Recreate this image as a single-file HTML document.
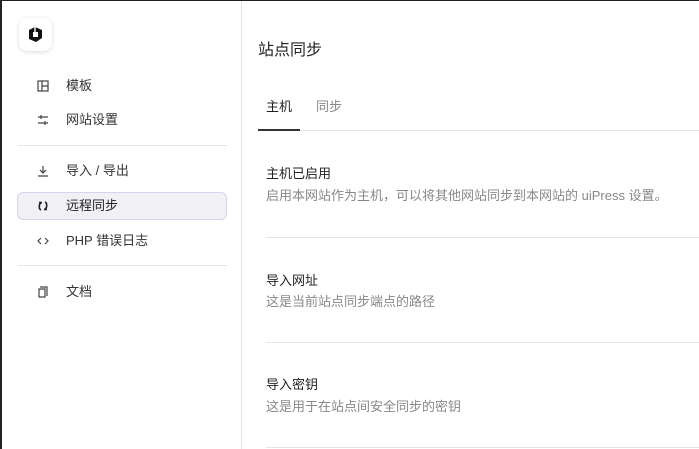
<!DOCTYPE html>
<html><head><meta charset="utf-8"><style>
*{margin:0;padding:0;box-sizing:border-box}
body{width:699px;height:449px;overflow:hidden;background:#fff;font-family:"Liberation Sans","Noto Sans CJK SC",sans-serif;position:relative;color:#222}
.frame{position:absolute;left:0;top:0;width:699px;height:449px;border-left:2px solid #222;border-top:1px solid #222}
.side{position:absolute;left:2px;top:1px;width:240px;height:448px;border-right:1px solid #e4e4e4}
.logo{position:absolute;left:17px;top:17px;width:33px;height:33px;border-radius:8px;background:#fff;box-shadow:0 1px 4px rgba(0,0,0,.15)}
.item{position:absolute;left:15px;width:210px;height:28px;font-size:13px;color:#333;line-height:28px}
.item .t{position:absolute;left:49px}
.item svg{position:absolute;left:20px;top:8px}
.act{background:#f1f0f5;border:1px solid #d6d3ee;border-radius:6px}
.hr{position:absolute;left:16px;width:209px;height:1px;background:#e4e4e4}
.h{position:absolute;font-size:16px;color:#222;white-space:nowrap}
.st{position:absolute;left:266px;font-size:13px;color:#222;white-space:nowrap}
.sd{position:absolute;left:266px;font-size:13px;color:#888;white-space:nowrap}
.ln{position:absolute;left:266px;right:0;height:1px;background:#e4e4e4}
</style></head><body>
<div class="frame"></div>
<div class="side">
<div class="logo"><svg width="33" height="33" viewBox="0 0 33 33"><path d="M10 12 L16 9 L23 12 L23 20 L17 24 L10 21 Z" fill="#111"/><path d="M14 14 L19 14 L19 19 L14 19Z" fill="#fff"/><path d="M16 9 L16 14" stroke="#fff" stroke-width="1.4"/></svg></div>
<div class="item" style="top:71px"><svg width="12" height="12" viewBox="0 0 12 12" fill="none" stroke="#444" stroke-width="1.2"><rect x="1" y="1" width="10" height="10"/><path d="M5 1V11M5 6H11"/></svg><span class="t">模板</span></div>
<div class="item" style="top:105px"><svg width="12" height="12" viewBox="0 0 12 12" fill="none" stroke="#444" stroke-width="1.2"><path d="M1 3H11M1 9H11M4 1V5M8 7V11"/></svg><span class="t">网站设置</span></div>
<div class="hr" style="top:144px"></div>
<div class="item" style="top:156px"><svg width="12" height="12" viewBox="0 0 12 12" fill="none" stroke="#444" stroke-width="1.2"><path d="M6 1V7M3 5L6 8L9 5M1 11H11"/></svg><span class="t">导入 / 导出</span></div>
<div class="item act" style="top:191px"><svg width="12" height="12" viewBox="0 0 12 12" fill="none" stroke="#222" stroke-width="1.6" style="left:19px;top:7px"><path d="M4.5 2.5Q1.5 4 2.5 8.5Q3 9.5 4 10M7.5 9.5Q10.5 8 9.5 3.5Q9 2.5 8 2M2 2.5H5M7 9.5H10"/></svg><span class="t" style="left:48px;line-height:26px;color:#222">远程同步</span></div>
<div class="item" style="top:226px"><svg width="12" height="12" viewBox="0 0 12 12" fill="none" stroke="#444" stroke-width="1.2"><path d="M4 3L1 6L4 9M8 3L11 6L8 9"/></svg><span class="t">PHP 错误日志</span></div>
<div class="hr" style="top:264px"></div>
<div class="item" style="top:277px"><svg width="12" height="12" viewBox="0 0 12 12" fill="none" stroke="#444" stroke-width="1.2"><path d="M3 1H10V10M2 3H8V11H2Z"/></svg><span class="t">文档</span></div>
</div>
<div class="h" style="left:258px;top:36px">站点同步</div>
<div class="h" style="left:266px;top:96px;font-size:13px">主机</div>
<div class="h" style="left:316px;top:96px;font-size:13px;color:#888">同步</div>
<div style="position:absolute;left:258px;right:0;top:130px;height:1px;background:#e4e4e4"></div>
<div style="position:absolute;left:258px;width:42px;top:129px;height:2px;background:#333"></div>
<div class="st" style="top:163px">主机已启用</div>
<div class="sd" style="top:185px">启用本网站作为主机，可以将其他网站同步到本网站的 uiPress 设置。</div>
<div class="ln" style="top:237px"></div>
<div class="st" style="top:270px">导入网址</div>
<div class="sd" style="top:291px">这是当前站点同步端点的路径</div>
<div class="ln" style="top:342px"></div>
<div class="st" style="top:374px">导入密钥</div>
<div class="sd" style="top:396px">这是用于在站点间安全同步的密钥</div>
<div class="ln" style="top:447px"></div>
</body></html>
